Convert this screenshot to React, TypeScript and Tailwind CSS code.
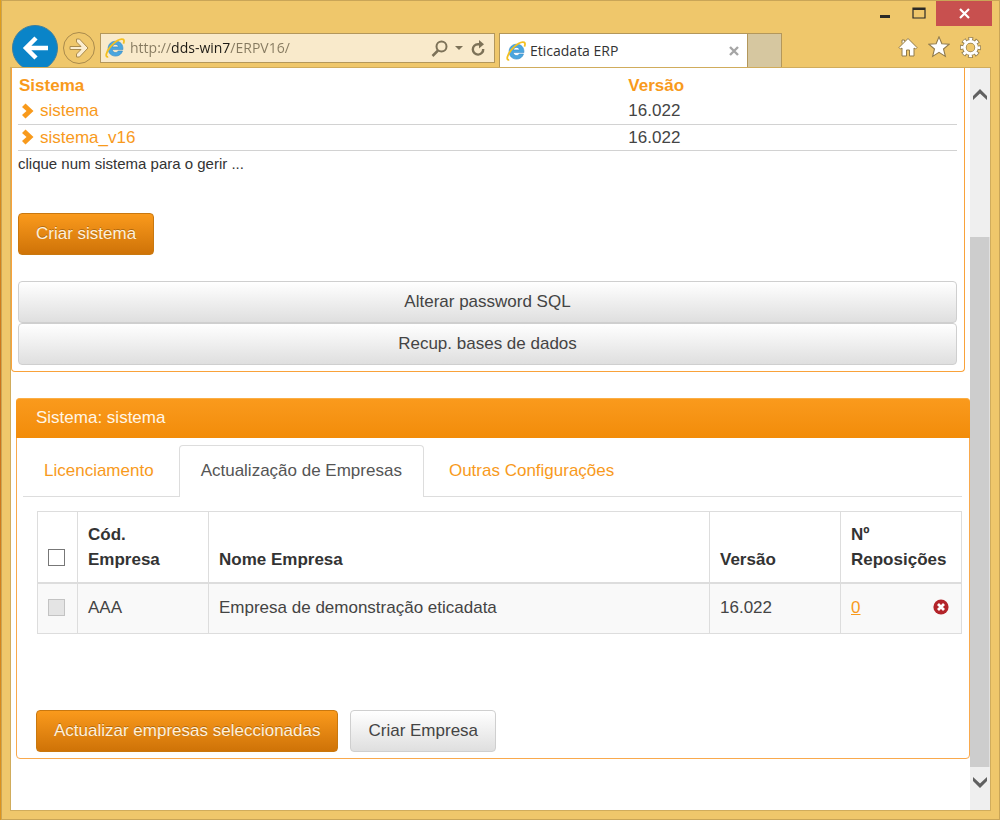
import type { ReactNode } from 'react';

const companies = [
  { code: 'AAA', name: 'Empresa de demonstração eticadata', version: '16.022', resets: 0 },
];

const systems = [
  { name: 'sistema', version: '16.022' },
  { name: 'sistema_v16', version: '16.022' },
];

function IeLogo() {
  return (
    <svg viewBox="0 0 20 20" className="h-5 w-5 shrink-0" fill="none">
      <path
        d="M17.500 13H13.200c-.6 1-1.400 1.500-2.700 1.500-1.900 0-3.100-1.200-3.200-2.900h10.600c.4-5-2.500-8.400-7.300-8.400-4.300 0-7.500 3-7.500 7.400 0 4.500 3.200 7.500 7.500 7.500 3.300 0 5.900-1.900 6.900-5.100zM7.400 8.900c.2-1.500 1.400-2.500 3.100-2.500s2.900 1 3 2.500z"
        fill="#4aa6df"
        stroke="#2f86c4"
        strokeWidth=".6"
      />
      <path
        d="M3.200 18.800C-.2 19.500 1 14 5.500 8.700 10 3.400 15.500-.1 18.200 1.400c1.200.7.900 2.600.2 4.300"
        stroke="#f4c020"
        strokeWidth="1.800"
      />
    </svg>
  );
}

function ChevronIcon() {
  return (
    <svg viewBox="0 0 12 16" className="h-4 w-3 shrink-0">
      <path d="M3.500.5 11.500 8 3.500 15.500 0 12 4.500 8 0 4z" fill="#f89a1c" />
    </svg>
  );
}

function RemoveIcon() {
  return (
    <svg viewBox="0 0 16 16" className="h-4 w-4">
      <circle cx="8" cy="8" r="7.600" fill="#b3242a" />
      <path d="M5 5l6 6M11 5l-6 6" stroke="#fff" strokeWidth="2.800" />
    </svg>
  );
}

function PrimaryButton({ children }: { children: ReactNode }) {
  return (
    <button
      type="button"
      className="h-[42px] rounded border border-[#c9780f] bg-linear-to-b from-[#fa9a1c] to-[#cf7307] px-[17px] text-[#fdf0dc] [text-shadow:0_-1px_0_#00000040]"
    >
      {children}
    </button>
  );
}

function DefaultButton({ children, block }: { children: ReactNode; block?: boolean }) {
  return (
    <button
      type="button"
      className={`h-[42px] rounded border border-[#cfcfcf] bg-linear-to-b from-white to-[#dfdfdf] px-[17px] text-[#444] ${block ? 'block w-full' : ''}`}
    >
      {children}
    </button>
  );
}

function BrowserBar() {
  return (
    <header className="flex h-[66px] shrink-0 overflow-hidden pl-[10px] font-['Open_Sans',sans-serif] text-sm">
      <button type="button" aria-label="Back" className="mt-6 h-[46px] w-[46px] shrink-0">
        <svg viewBox="0 0 46 46" className="h-full w-full" fill="none">
          <circle cx="23" cy="23" r="22.500" fill="#0a84c8" stroke="#3c7ea0" />
          <path d="M36 23H14M24 13 14 23l10 10" stroke="#fff" strokeWidth="4.500" />
        </svg>
      </button>
      <button type="button" aria-label="Forward" className="mt-[30px] ml-1 h-[34px] w-[34px] shrink-0">
        <svg viewBox="0 0 34 34" className="h-full w-full" fill="none">
          <circle cx="17" cy="17" r="15.500" stroke="#a98a4c" />
          <path
            d="M8 15.500h11L14.500 11V8h3l8.500 9-8.500 9h-3v-3l4.500-4.500H8z"
            fill="#fbedd0"
            stroke="#a98a4c"
          />
        </svg>
      </button>
      <div className="mt-8 ml-1 flex h-[30px] min-w-0 flex-1 items-center border border-[#b3975b] bg-[#f9eacb] pr-2 pl-1">
        <IeLogo />
        <input
          type="text"
          aria-label="Address"
          defaultValue="http://dds-win7/ERPV16/"
          className="ml-1 min-w-0 flex-1 bg-[linear-gradient(90deg,#85795f_43px,#1d1a14_43px,#1d1a14_101px,#85795f_101px)] bg-clip-text px-px text-transparent outline-none"
        />
        <button type="button" aria-label="Search" className="w-[17px]">
          <svg viewBox="0 0 17 17" className="w-full" fill="none" stroke="#7d7258" strokeWidth="2">
            <circle cx="10.500" cy="6.500" r="5" />
            <path d="M7 10.500 1.500 16" strokeWidth="2.500" />
          </svg>
        </button>
        <svg viewBox="0 0 10 6" className="mx-[6px] h-[6px] w-[10px]" fill="#7d7258">
          <path d="M1 1h8L5 5z" />
        </svg>
        <button type="button" aria-label="Refresh" className="w-4">
          <svg viewBox="0 0 16 16" className="w-full" fill="none" stroke="#7d7258" strokeWidth="2.400">
            <path d="M13.200 9A5.200 5.200 0 1 1 8 4.200h2" />
            <path d="M9 0l5 4.200-5 4.300z" fill="#7d7258" stroke="none" />
          </svg>
        </button>
      </div>
      <div className="mt-8 ml-1 flex w-[249px] items-center border border-b-0 border-[#b3975b] bg-white pr-2 pl-[6px] text-[#333]">
        <IeLogo />
        <span className="ml-1 flex-1">Eticadata ERP</span>
        <button type="button" aria-label="Close tab" className="w-[10px]">
          <svg viewBox="0 0 10 10" className="w-full" stroke="#a5a5a5" strokeWidth="2.400">
            <path d="M1 1l8 8M9 1 1 9" />
          </svg>
        </button>
      </div>
      <button
        type="button"
        aria-label="New tab"
        className="mt-8 w-[34px] border border-b-0 border-l-0 border-[#b3975b] bg-[#d6c7a0]"
      />
      <div className="flex w-[217px] flex-col items-end">
        <div className="flex h-6 items-center pr-[7px]">
          <button type="button" aria-label="Minimize" className="w-[34px]">
            <svg viewBox="0 0 34 24" className="w-full">
              <path d="M12 14h10v3H12z" fill="#2b2a26" />
            </svg>
          </button>
          <button type="button" aria-label="Maximize" className="w-[34px]">
            <svg viewBox="0 0 34 24" className="w-full">
              <path d="M11 7h12v10H11z" fill="none" stroke="#2b2a26" strokeWidth="1.200" />
              <path d="M11 7h12v2H11z" fill="#2b2a26" />
            </svg>
          </button>
          <button type="button" aria-label="Close" className="h-[25px] w-14 bg-[#c8504f]">
            <svg viewBox="0 0 56 24" className="w-full" stroke="#fff" strokeWidth="2.200">
              <path d="M24 8l9 9M33 8l-9 9" />
            </svg>
          </button>
        </div>
        <div className="mt-[11px] flex gap-[10px] pr-[18px]">
          <button type="button" aria-label="Home" className="w-5">
            <svg viewBox="0 0 20 20" className="w-full" fill="#fff" stroke="#8f7a4c" strokeWidth="1">
              <path d="M10 1.500 1 10.500 2.500 12l1.500-1v8h4.500v-6h3v6H16v-8l1.500 1 1.500-1.500-9-9z" />
              <path d="M4 6.500V3h2.500v1.500" />
            </svg>
          </button>
          <button type="button" aria-label="Favorites" className="w-[22px]">
            <svg viewBox="0 0 20 20" className="w-full" fill="#fff" stroke="#8f7a4c" strokeWidth="1">
              <path d="M10 .8l2.600 6.300 6.700.4-5.200 4.300 1.700 6.700L10 14.900l-5.800 3.600 1.700-6.700L.7 7.500l6.700-.4z" />
            </svg>
          </button>
          <button type="button" aria-label="Tools" className="w-[21px]">
            <svg viewBox="0 0 20 20" className="w-full" fill="none">
              <circle cx="10" cy="10" r="8" stroke="#8f7a4c" strokeWidth="4" strokeDasharray="4.280 2" strokeDashoffset="2.140" />
              <circle cx="10" cy="10" r="5.800" stroke="#8f7a4c" strokeWidth="4" />
              <circle cx="10" cy="10" r="8" stroke="#fff" strokeWidth="2.600" strokeDasharray="2.800 3.480" strokeDashoffset="1.400" />
              <circle cx="10" cy="10" r="5.800" stroke="#fff" strokeWidth="2.600" />
            </svg>
          </button>
        </div>
      </div>
    </header>
  );
}

function ScrollBar() {
  return (
    <div className="flex w-5 shrink-0 flex-col bg-[#efefef]">
      <button type="button" aria-label="Scroll up" className="flex h-[169px] items-start pt-5">
        <svg viewBox="0 0 20 14" className="h-[14px] w-5" fill="#606060">
          <path d="M10 1l7 7v4l-7-6.500L3 12V8z" />
        </svg>
      </button>
      <div className="flex-1 border-r border-[#e0e0e0] bg-[#cdcdcd]" />
      <button type="button" aria-label="Scroll down" className="flex h-[43px] items-start pt-2">
        <svg viewBox="0 0 20 14" className="h-[14px] w-5" fill="#606060">
          <path d="M10 13l7-7V2l-7 6.500L3 2v4z" />
        </svg>
      </button>
    </div>
  );
}

function SystemsPanel() {
  return (
    <section className="mr-[5px] rounded-b border border-t-0 border-[#f9a23a] pt-[5px] pr-[7px] pb-[6px] pl-[6px]">
      <table className="w-full text-left">
        <thead>
          <tr className="text-[#f89a1c]">
            <th className="h-[25px] w-[65%] px-px py-0">Sistema</th>
            <th className="py-0">Versão</th>
          </tr>
        </thead>
        <tbody>
          {systems.map((s) => (
            <tr key={s.name} className="h-[26px] border-b border-[#d2d2d2]">
              <td className="px-1 py-0">
                <a href="#" className="flex items-center gap-[6px] text-[#f89a1c]">
                  <ChevronIcon />
                  {s.name}
                </a>
              </td>
              <td className="py-0">{s.version}</td>
            </tr>
          ))}
        </tbody>
      </table>
      <p className="text-[15px] text-[#333]">clique num sistema para o gerir ...</p>
      <div className="mt-[37px] mb-[26px]">
        <PrimaryButton>Criar sistema</PrimaryButton>
      </div>
      <DefaultButton block>Alterar password SQL</DefaultButton>
      <DefaultButton block>Recup. bases de dados</DefaultButton>
    </section>
  );
}

function CompaniesPanel() {
  return (
    <section className="mt-[26px] ml-[5px] rounded border border-[#f9a94d]">
      <h2 className="-mx-px -mt-px h-10 rounded-t border-t border-[#fbae45] bg-linear-to-b from-[#fa9a1c] to-[#f28c08] px-5 leading-[38px] text-[#fff6e6]">
        Sistema: sistema
      </h2>
      <nav className="mr-[7px] ml-[6px] flex gap-1 border-b border-[#ddd] pt-[7px]">
        <a href="#" className="px-[21px] py-[13px] text-[#f89a1c]">
          Licenciamento
        </a>
        <a
          href="#"
          aria-current="page"
          className="-mb-px rounded-t border border-b-0 border-[#ddd] bg-white px-[21px] pt-3 pb-[14px] text-[#555]"
        >
          Actualização de Empresas
        </a>
        <a href="#" className="px-[21px] py-[13px] text-[#f89a1c]">
          Outras Configurações
        </a>
      </nav>
      <div className="pt-[14px] pr-[7px] pb-[6px] pl-5">
        <table className="w-full border-collapse border border-[#ddd] text-left [&_td]:border [&_td]:border-[#ddd] [&_td]:px-[10px] [&_td]:pt-[11px] [&_td]:pb-[13px] [&_th]:border [&_th]:border-[#ddd] [&_th]:px-[10px] [&_th]:py-[10px] [&_th]:align-bottom">
          <thead>
            <tr className="border-b-2 border-[#ddd] text-[#333]">
              <th className="w-10">
                <input
                  type="checkbox"
                  aria-label="Seleccionar todas"
                  className="mb-[6px] block h-[17px] w-[17px] appearance-none border border-[#777] bg-white"
                />
              </th>
              <th className="w-[131px]">Cód. Empresa</th>
              <th>Nome Empresa</th>
              <th className="w-[131px]">Versão</th>
              <th className="w-[121px]">Nº Reposições</th>
            </tr>
          </thead>
          <tbody>
            {companies.map((c) => (
              <tr key={c.code} className="bg-[#f9f9f9]">
                <td>
                  <input
                    type="checkbox"
                    disabled
                    aria-label={c.name}
                    className="block h-[17px] w-[17px] appearance-none border border-[#c3c3c3] bg-[#e4e4e4]"
                  />
                </td>
                <td>{c.code}</td>
                <td>{c.name}</td>
                <td>{c.version}</td>
                <td>
                  <div className="flex items-center justify-between pr-[2px]">
                    <a href="#" className="text-[#f89a1c] underline">
                      {c.resets}
                    </a>
                    <button type="button" aria-label="Remover">
                      <RemoveIcon />
                    </button>
                  </div>
                </td>
              </tr>
            ))}
          </tbody>
        </table>
        <div className="mt-[76px] -ml-px flex gap-3">
          <PrimaryButton>Actualizar empresas seleccionadas</PrimaryButton>
          <DefaultButton>Criar Empresa</DefaultButton>
        </div>
      </div>
    </section>
  );
}

export default function App() {
  return (
    <div className="flex min-h-screen bg-linear-to-b from-[#e09f1c] via-[#c9701c] to-[#dd941d] pl-px font-['Liberation_Sans',sans-serif] text-[17px] leading-[25px] text-[#444]">
      <div className="flex min-w-0 flex-1 flex-col border border-[#c9a557] bg-[#efc76b]">
        <BrowserBar />
        <div className="mx-2 mb-2 flex flex-1 border border-[#d0ac5c] bg-white">
          <main className="min-w-0 flex-1">
            <SystemsPanel />
            <CompaniesPanel />
          </main>
          <ScrollBar />
        </div>
      </div>
    </div>
  );
}
